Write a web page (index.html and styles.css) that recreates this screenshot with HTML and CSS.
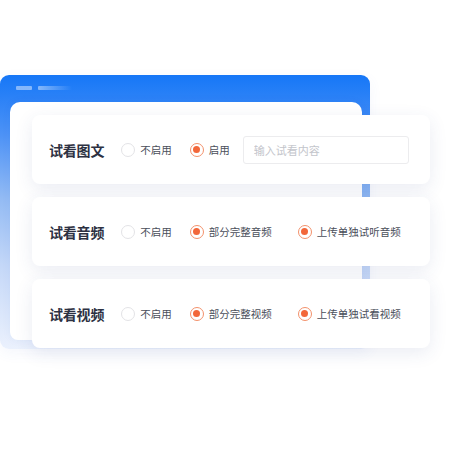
FILE: index.html
```html
<!DOCTYPE html>
<html lang="zh-CN">

<head>
    <meta charset="UTF-8">
    <meta name="viewport" content="width=device-width, initial-scale=1.0">
    <title>试看设置</title>
    <link rel="stylesheet" href="styles.css">
</head>

<body>
    <div class="stage">
        <!-- Backdrop window -->
        <div class="window">
            <div class="window-bar">
                <span class="bar-line"></span>
                <span class="bar-line bar-line-fade"></span>
            </div>
            <div class="window-body"></div>
        </div>

        <!-- Setting cards, laid over the window -->
        <div class="cards">
            <div class="card">
                <span class="card-title">试看图文</span>
                <label class="opt"><span class="radio"></span>不启用</label>
                <label class="opt opt-short"><span class="radio checked"></span>启用</label>
                <input class="trial-input" type="text" placeholder="输入试看内容">
            </div>
            <div class="card">
                <span class="card-title">试看音频</span>
                <label class="opt"><span class="radio"></span>不启用</label>
                <label class="opt opt-long"><span class="radio checked"></span>部分完整音频</label>
                <label class="opt"><span class="radio checked"></span>上传单独试听音频</label>
            </div>
            <div class="card">
                <span class="card-title">试看视频</span>
                <label class="opt"><span class="radio"></span>不启用</label>
                <label class="opt opt-long"><span class="radio checked"></span>部分完整视频</label>
                <label class="opt"><span class="radio checked"></span>上传单独试看视频</label>
            </div>
        </div>
    </div>
</body>

</html>
```

FILE: styles.css
```css
body {
    margin: 0;
    background: #ffffff;
    font-family: 'Noto Sans CJK SC', 'Noto Sans', sans-serif;
}

.stage {
    position: relative;
    width: 450px;
    height: 450px;
    padding-top: 75px;
    box-sizing: border-box;
    overflow: hidden;
}

/* Blue window behind the cards */
.window {
    width: 370px;
    height: 274px;
    border-radius: 9px;
    background: linear-gradient(to bottom, #1677f7 0%, #4e93f6 22%, #93bbf4 45%, #c5d8f8 70%, #ebf1fd 100%);
    box-shadow: 0 4px 14px rgba(60, 100, 200, 0.06);
    display: flex;
    flex-direction: column;
}

.window-bar {
    height: 27px;
    padding: 11px 0 0 16px;
    box-sizing: border-box;
    display: flex;
    gap: 6px;
}

.bar-line {
    width: 16px;
    height: 4px;
    border-radius: 1px;
    background: rgba(255, 255, 255, 0.45);
}

.bar-line-fade {
    width: 34px;
    background: linear-gradient(to right, rgba(255, 255, 255, 0.45), rgba(255, 255, 255, 0));
}

.window-body {
    width: 352px;
    height: 238px;
    margin-left: 10px;
    background: #ffffff;
    border-radius: 10px 10px 10px 8px;
    box-shadow: 0 0 10px rgba(40, 80, 160, 0.05);
}

/* Cards */
.cards {
    position: absolute;
    top: 115px;
    left: 32px;
    width: 398px;
    display: flex;
    flex-direction: column;
    gap: 13px;
}

.card {
    height: 69px;
    background: #ffffff;
    border-radius: 8px;
    box-shadow: 0 5px 18px rgba(50, 70, 140, 0.1);
    display: flex;
    align-items: center;
    padding-left: 17px;
}

.card-title {
    font-size: 14px;
    font-weight: bold;
    color: #2d3142;
    margin-right: 17px;
    letter-spacing: -0.2px;
}

.opt {
    display: flex;
    align-items: center;
    font-size: 10.5px;
    color: #4a4e5a;
    margin-right: 18px;
}

.opt-short {
    margin-right: 13px;
}

.opt-long {
    margin-right: 26px;
}

.radio {
    width: 14px;
    height: 14px;
    border: 1px solid #e3e3e6;
    border-radius: 50%;
    box-sizing: border-box;
    margin-right: 5px;
    background: #ffffff;
    position: relative;
}

.radio.checked {
    border: 1.5px solid #f3916b;
}

.radio.checked::after {
    content: '';
    position: absolute;
    left: 50%;
    top: 50%;
    width: 7px;
    height: 7px;
    margin: -3.5px 0 0 -3.5px;
    border-radius: 50%;
    background: #f2673a;
}

.trial-input {
    width: 166px;
    height: 28px;
    border: 1px solid #ececee;
    border-radius: 3px;
    box-sizing: border-box;
    padding: 0 10px;
    font-family: inherit;
    font-size: 11px;
    color: #4a4e5a;
    outline: none;
}

.trial-input::placeholder {
    color: #c3c5cb;
}
```
